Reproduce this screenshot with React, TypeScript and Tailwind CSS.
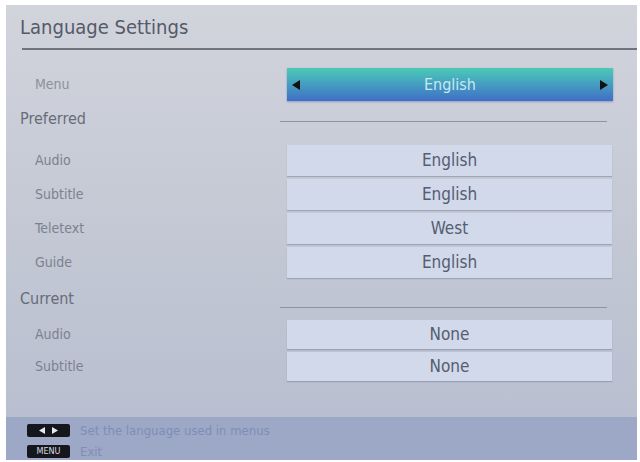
import React from 'react';

type Row = { label: string; value: string };

const preferred: Row[] = [
  { label: 'Audio', value: 'English' },
  { label: 'Subtitle', value: 'English' },
  { label: 'Teletext', value: 'West' },
  { label: 'Guide', value: 'English' },
];

const current: Row[] = [
  { label: 'Audio', value: 'None' },
  { label: 'Subtitle', value: 'None' },
];

function ValueRow({ row, h }: { row: Row; h: string }) {
  return (
    <div className={`flex items-center ${h}`}>
      <div className="w-[281px] pl-[29px] text-[14px] text-[#7c8190]">{row.label}</div>
      <div className="w-[325px] h-full flex items-center justify-center bg-[#d1d9eb] shadow-[0_1px_1px_rgba(90,100,130,0.35)] text-[17px] text-[#555d70]">
        {row.value}
      </div>
    </div>
  );
}

export default function App() {
  return (
    <div className="w-[640px] h-[462px] bg-white pt-[5px] pl-[6px] pr-[3px] pb-[2px] font-['DejaVu_Sans_Condensed','DejaVu_Sans',sans-serif] [font-stretch:condensed]">
      <div className="h-full flex flex-col bg-gradient-to-b from-[#d2d4dc] via-[#c3c8d4] to-[#b7bdcf]">
        {/* Header */}
        <div className="h-[45px] flex flex-col">
          <div className="h-[43px] flex items-center pl-[14px] text-[20px] text-[#555a68]">Language Settings</div>
          <div className="ml-[16px] h-[2px] bg-[#6f7380]" />
        </div>

        {/* Menu */}
        <div className="mt-[18px] h-[33px] flex items-center">
          <div className="w-[281px] pl-[29px] text-[14px] text-[#8c909b]">Menu</div>
          <div className="w-[326px] h-full flex items-center justify-between px-[4px] bg-gradient-to-b from-[#4ccab5] to-[#416dc6] shadow-[0_1px_2px_rgba(60,80,140,0.4)]">
            <svg width="10" height="12" viewBox="0 0 10 12"><path d="M9 1 L1 6 L9 11 Z" fill="#111" /></svg>
            <span className="text-[16px] text-[#c9e9f2]">English</span>
            <svg width="10" height="12" viewBox="0 0 10 12"><path d="M1 1 L9 6 L1 11 Z" fill="#111" /></svg>
          </div>
        </div>

        {/* Preferred */}
        <div className="mt-[3px] h-[30px] flex items-center">
          <div className="w-[274px] pl-[14px] text-[16px] text-[#676c7a]">Preferred</div>
          <div className="w-[327px] h-px bg-[#8e93a0] mt-[4px]" />
        </div>
        <div className="mt-[11px] flex flex-col gap-[3px]">
          {preferred.map((r) => (
            <ValueRow key={r.label} row={r} h="h-[31px]" />
          ))}
        </div>

        {/* Current */}
        <div className="mt-[7px] h-[28px] flex items-center">
          <div className="w-[274px] pl-[14px] text-[16px] text-[#676c7a]">Current</div>
          <div className="w-[327px] h-px bg-[#8e93a0] mt-[16px]" />
        </div>
        <div className="mt-[7px] flex flex-col gap-[3px]">
          {current.map((r) => (
            <ValueRow key={r.label} row={r} h="h-[29px]" />
          ))}
        </div>

        {/* Footer */}
        <div className="mt-auto h-[43px] bg-[#9ca8c5] pl-[21px] pt-[7px] flex flex-col gap-[8px] overflow-hidden">
          <div className="flex items-center gap-[10px] h-[13px]">
            <div className="w-[43px] h-[13px] rounded-[2px] bg-[#15171d] flex items-center justify-center gap-[7px]">
              <svg width="6" height="7" viewBox="0 0 6 7"><path d="M6 0 L0 3.5 L6 7 Z" fill="#e8e8ee" /></svg>
              <svg width="6" height="7" viewBox="0 0 6 7"><path d="M0 0 L6 3.5 L0 7 Z" fill="#e8e8ee" /></svg>
            </div>
            <span className="text-[13px] leading-[13px] text-[#7f8db6]">Set the language used in menus</span>
          </div>
          <div className="flex items-center gap-[10px] h-[13px]">
            <div className="w-[43px] h-[13px] rounded-[2px] bg-[#15171d] flex items-center justify-center text-[9px] text-[#d8dae2]">MENU</div>
            <span className="text-[13px] leading-[13px] text-[#7f8db6]">Exit</span>
          </div>
        </div>
      </div>
    </div>
  );
}
